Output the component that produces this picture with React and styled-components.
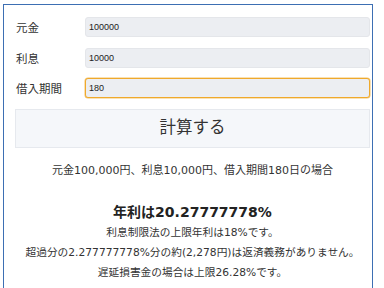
import React, { useState } from "react";
import styled, { createGlobalStyle } from "styled-components";

const GlobalStyle = createGlobalStyle`
  body {
    margin: 0;
    background: #ffffff;
    font-family: "DejaVu Sans", "Noto Sans CJK JP", sans-serif;
    color: #333333;
  }
`;

const Frame = styled.div`
  margin: 4px 0 0 3px;
  width: 370px;
  height: 300px;
  box-sizing: border-box;
  border: 1.5px solid #3d6fb3;
  padding: 12px 2px 0 11px;
`;

const FormRow = styled.div`
  display: flex;
  align-items: center;
  height: 20px;
  margin-bottom: 10.5px;
`;

const Label = styled.label`
  width: 69px;
  padding-left: 1px;
  font-family: "Noto Sans CJK JP", sans-serif;
  font-size: 11.5px;
  color: #333333;
`;

const Field = styled.input`
  flex: 1;
  height: 20px;
  box-sizing: border-box;
  border: 1px solid ${(p) => (p.$focused ? "#efa92c" : "#e4e6ea")};
  border-radius: 3px;
  background: #eceef2;
  padding: 0 3px;
  font-family: "Liberation Sans", sans-serif;
  font-size: 9px;
  color: #222222;
  outline: none;
  box-shadow: ${(p) => (p.$focused ? "0 0 0 0.5px #f5c36a" : "none")};
`;

const CalcButton = styled.button`
  display: block;
  width: 100%;
  height: 39px;
  padding: 0 0 5px;
  border: 1px solid #e6e9ee;
  background: #f5f7fa;
  font-family: "Noto Sans CJK JP", sans-serif;
  font-size: 16.5px;
  color: #333333;
  cursor: pointer;
`;

const Result = styled.div`
  text-align: center;
  padding-top: 13px;
`;

const Condition = styled.p`
  margin: 0 0 20px;
  font-size: 11px;
  line-height: 20px;
`;

const Rate = styled.h2`
  margin: 0;
  font-size: 14px;
  line-height: 22px;
  font-weight: bold;
  color: #222222;
`;

const Note = styled.p`
  margin: 0;
  font-size: 10.7px;
  line-height: 20px;
`;

export default function App() {
  const [principal, setPrincipal] = useState("100000");
  const [interest, setInterest] = useState("10000");
  const [days, setDays] = useState("180");

  return (
    <Frame>
      <GlobalStyle />
      <FormRow>
        <Label>元金</Label>
        <Field value={principal} onChange={(e) => setPrincipal(e.target.value)} />
      </FormRow>
      <FormRow>
        <Label>利息</Label>
        <Field value={interest} onChange={(e) => setInterest(e.target.value)} />
      </FormRow>
      <FormRow>
        <Label>借入期間</Label>
        <Field $focused value={days} onChange={(e) => setDays(e.target.value)} />
      </FormRow>
      <CalcButton>計算する</CalcButton>
      <Result>
        <Condition>元金100,000円、利息10,000円、借入期間180日の場合</Condition>
        <Rate>年利は20.27777778%</Rate>
        <Note>利息制限法の上限年利は18%です。</Note>
        <Note>超過分の2.277777778%分の約(2,278円)は返済義務がありません。</Note>
        <Note>遅延損害金の場合は上限26.28%です。</Note>
      </Result>
    </Frame>
  );
}
